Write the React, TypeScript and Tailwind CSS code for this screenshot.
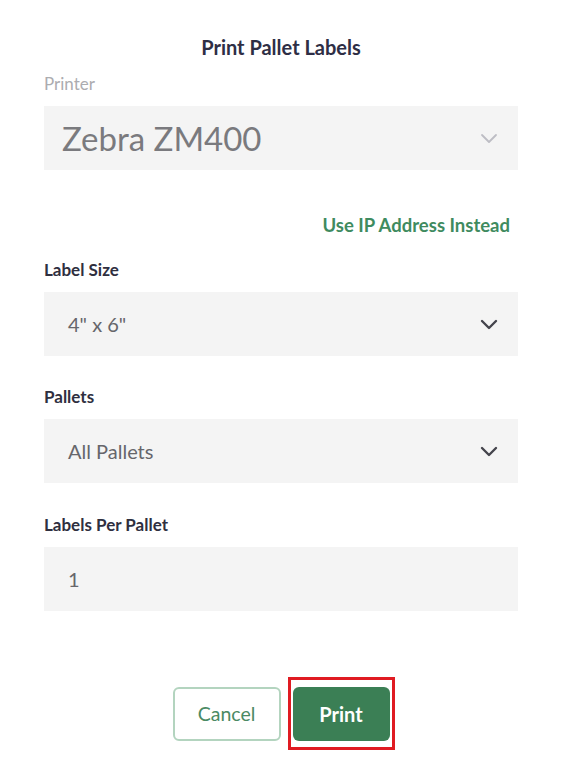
const font = { fontFamily: "Lato, 'Noto Sans', sans-serif" };

function Chevron({ light }: { light?: boolean }) {
  return (
    <svg width="18" height="11" viewBox="0 0 18 11" className="shrink-0">
      <path
        d="M2 2 L9 9 L16 2"
        fill="none"
        stroke={light ? "#bdbdc4" : "#44444c"}
        strokeWidth={light ? 1.8 : 2.4}
        strokeLinecap="round"
        strokeLinejoin="round"
      />
    </svg>
  );
}

function Field({
  label,
  value,
  select = true,
  className = "",
}: {
  label: string;
  value: string;
  select?: boolean;
  className?: string;
}) {
  return (
    <div className={className}>
      <div className="h-5 text-[17px] font-bold leading-5 text-[#2f2f3f]">{label}</div>
      <div className="mt-3 flex h-16 items-center justify-between bg-[#f4f4f4] pl-6 pr-5">
        <span className="text-[20px] text-[#66666b]">{value}</span>
        {select && <Chevron />}
      </div>
    </div>
  );
}

export default function App() {
  return (
    <div className="min-h-screen bg-white pl-[44px] pt-[35px]" style={font}>
      <div className="w-[474px]">
        <h1 className="h-6 text-center text-[20px] font-bold leading-6 text-[#2e2e45]">
          Print Pallet Labels
        </h1>

        <div className="mt-[15px] h-5 text-[17px] leading-5 text-[#acacb0]">Printer</div>
        <div className="mt-3 flex h-16 items-center justify-between bg-[#f4f4f4] pl-[18px] pr-5">
          <span className="text-[33px] leading-none text-[#7a7a7e]">Zebra ZM400</span>
          <Chevron light />
        </div>

        <div className="mt-[43px] flex h-6 justify-end pr-2">
          <button type="button" className="text-[18.5px] font-bold leading-6 text-[#3f8b5f]">
            Use IP Address Instead
          </button>
        </div>

        <Field className="mt-[23px]" label="Label Size" value={'4" x 6"'} />
        <Field className="mt-[31px]" label="Pallets" value="All Pallets" />
        <Field className="mt-[32px]" label="Labels Per Pallet" value="1" select={false} />

        <div className="mt-[76px] flex justify-center gap-3">
          <button
            type="button"
            className="h-[54px] w-[108px] rounded-md border-2 border-[#b3d4bf] bg-white text-[19.5px] text-[#4a8a64]"
          >
            Cancel
          </button>
          <div className="relative">
            <button
              type="button"
              className="h-[54px] w-[97px] rounded-md bg-[#3b7f55] text-[20px] font-bold text-white"
            >
              Print
            </button>
            <span className="pointer-events-none absolute -bottom-[9px] -left-[5px] -right-[5px] -top-[10px] border-[3px] border-[#e01b22]" />
          </div>
        </div>
      </div>
    </div>
  );
}
